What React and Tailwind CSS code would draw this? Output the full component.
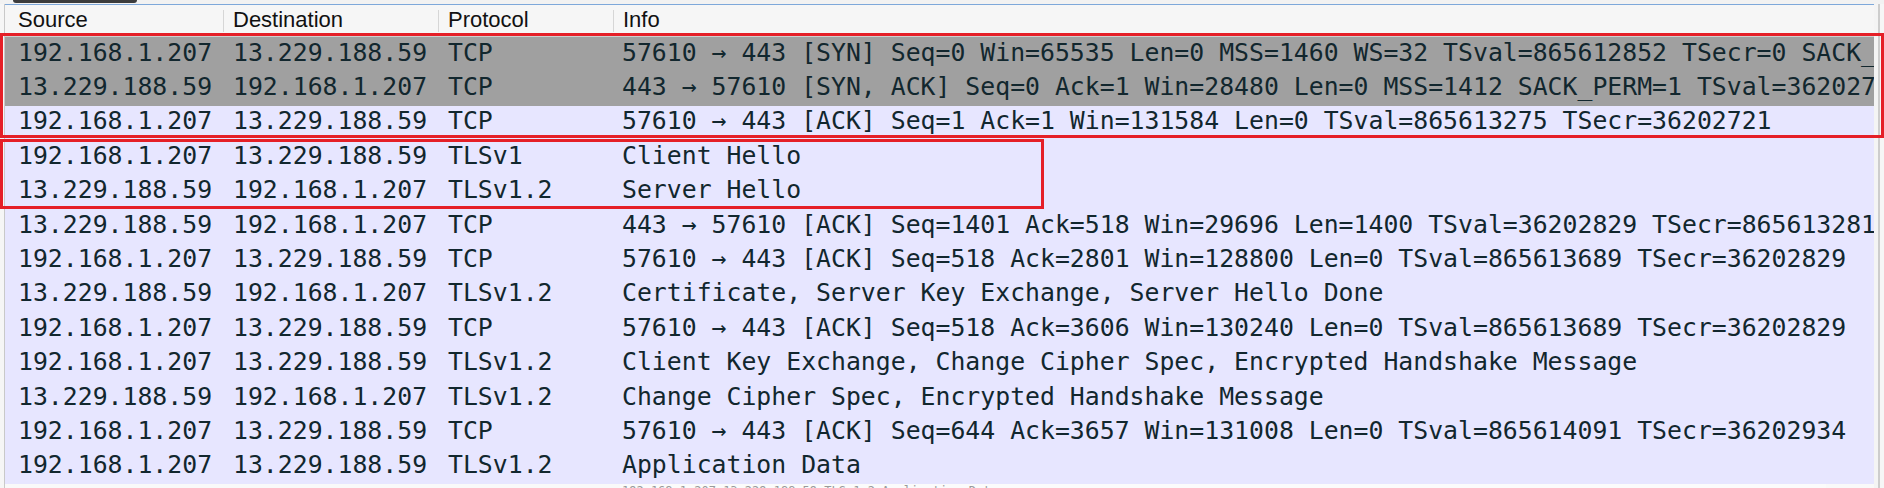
import React from "react";

const rows = [
  ["192.168.1.207", "13.229.188.59", "TCP", "57610 → 443 [SYN] Seq=0 Win=65535 Len=0 MSS=1460 WS=32 TSval=865612852 TSecr=0 SACK_PERM=1", true],
  ["13.229.188.59", "192.168.1.207", "TCP", "443 → 57610 [SYN, ACK] Seq=0 Ack=1 Win=28480 Len=0 MSS=1412 SACK_PERM=1 TSval=36202721 TSecr=865612852 WS=128", true],
  ["192.168.1.207", "13.229.188.59", "TCP", "57610 → 443 [ACK] Seq=1 Ack=1 Win=131584 Len=0 TSval=865613275 TSecr=36202721", false],
  ["192.168.1.207", "13.229.188.59", "TLSv1", "Client Hello", false],
  ["13.229.188.59", "192.168.1.207", "TLSv1.2", "Server Hello", false],
  ["13.229.188.59", "192.168.1.207", "TCP", "443 → 57610 [ACK] Seq=1401 Ack=518 Win=29696 Len=1400 TSval=36202829 TSecr=865613281", false],
  ["192.168.1.207", "13.229.188.59", "TCP", "57610 → 443 [ACK] Seq=518 Ack=2801 Win=128800 Len=0 TSval=865613689 TSecr=36202829", false],
  ["13.229.188.59", "192.168.1.207", "TLSv1.2", "Certificate, Server Key Exchange, Server Hello Done", false],
  ["192.168.1.207", "13.229.188.59", "TCP", "57610 → 443 [ACK] Seq=518 Ack=3606 Win=130240 Len=0 TSval=865613689 TSecr=36202829", false],
  ["192.168.1.207", "13.229.188.59", "TLSv1.2", "Client Key Exchange, Change Cipher Spec, Encrypted Handshake Message", false],
  ["13.229.188.59", "192.168.1.207", "TLSv1.2", "Change Cipher Spec, Encrypted Handshake Message", false],
  ["192.168.1.207", "13.229.188.59", "TCP", "57610 → 443 [ACK] Seq=644 Ack=3657 Win=131008 Len=0 TSval=865614091 TSecr=36202934", false],
  ["192.168.1.207", "13.229.188.59", "TLSv1.2", "Application Data", false],
];

function HeaderCell({ label, first, width }) {
  return (
    <div className={`flex items-start h-full ${width}`}>
      {!first && <div className="w-px h-[22px] mt-[5px] bg-[#d6d6d6] shrink-0" />}
      <span className={`${first ? "pl-[13px]" : "pl-[9px]"} pt-[4px] text-[22px] leading-none text-[#111]`}>{label}</span>
    </div>
  );
}

export default function App() {
  return (
    <div
      className="relative w-[1884px] h-[488px] overflow-hidden bg-[#f6f6f6] flex flex-col"
      style={{ fontFamily: '"Liberation Sans", Arial, sans-serif' }}
    >
      {/* top strip with tab bottom */}
      <div className="h-[4px] shrink-0 flex bg-[#f2f2f2]">
        <div className="ml-[13px] w-[124px] h-[3px] bg-[#3c3c3c] rounded-b-[3px]" />
      </div>
      <div className="flex flex-1 min-h-0">
        <div className="w-[4px] shrink-0 bg-[#f6f6f6]" />
        <div className="w-[1870px] shrink-0 border-l border-[#c9c9c9] flex flex-col min-h-0">
          <div className="h-px bg-[#7ea8da] shrink-0" />
          <div className="h-[32px] shrink-0 flex bg-[#f6f6f6] border-b border-[#cfcfcf]">
            <HeaderCell label="Source" first width="w-[218px]" />
            <HeaderCell label="Destination" width="w-[215px]" />
            <HeaderCell label="Protocol" width="w-[175px]" />
            <HeaderCell label="Info" width="flex-1" />
          </div>
          <div
            className="flex flex-col text-[#12272e] text-[24.8px] leading-[1.25]"
            style={{ fontFamily: '"DejaVu Sans Mono", "Liberation Mono", monospace' }}
          >
            {rows.map((r, i) => (
              <div
                key={i}
                className={`h-[34.4px] shrink-0 flex items-center whitespace-nowrap pb-[2px] ${r[4] ? "bg-[#a0a0a0]" : "bg-[#e7e6ff]"}`}
              >
                <div className="w-[218px] pl-[13px] shrink-0">{r[0]}</div>
                <div className="w-[215px] pl-[10px] shrink-0">{r[1]}</div>
                <div className="w-[175px] pl-[10px] shrink-0">{r[2]}</div>
                <div className="flex-1 pl-[9px] overflow-hidden">{r[3]}</div>
              </div>
            ))}
          </div>
          <div className="flex-1 bg-[#f9f9f9]" />
        </div>
        <div className="w-[4px] shrink-0 bg-[#f4f4f4]" />
        <div className="w-[2px] shrink-0 bg-[#cdcdcd]" />
        <div className="w-[4px] shrink-0 bg-[#f6f6f6]" />
      </div>

      {/* tooltip ghost at bottom */}
      <div className="absolute left-[620px] top-[484px] w-[1206px] h-[20px] bg-[#fbfbfb] text-[#9a9a9a] text-[12px] leading-none pl-[2px] pt-[1px] whitespace-nowrap"
        style={{ fontFamily: '"DejaVu Sans Mono", monospace' }}>
        192.168.1.207 13.229.188.59 TLSv1.2 Application Data
      </div>

      {/* red highlight boxes */}
      <div className="absolute left-0 top-[33px] w-[1884px] h-[105px] border-[3px] border-[#e51f27]" />
      <div className="absolute left-0 top-[139px] w-[1044px] h-[70px] border-[3px] border-[#e51f27]" />
    </div>
  );
}
